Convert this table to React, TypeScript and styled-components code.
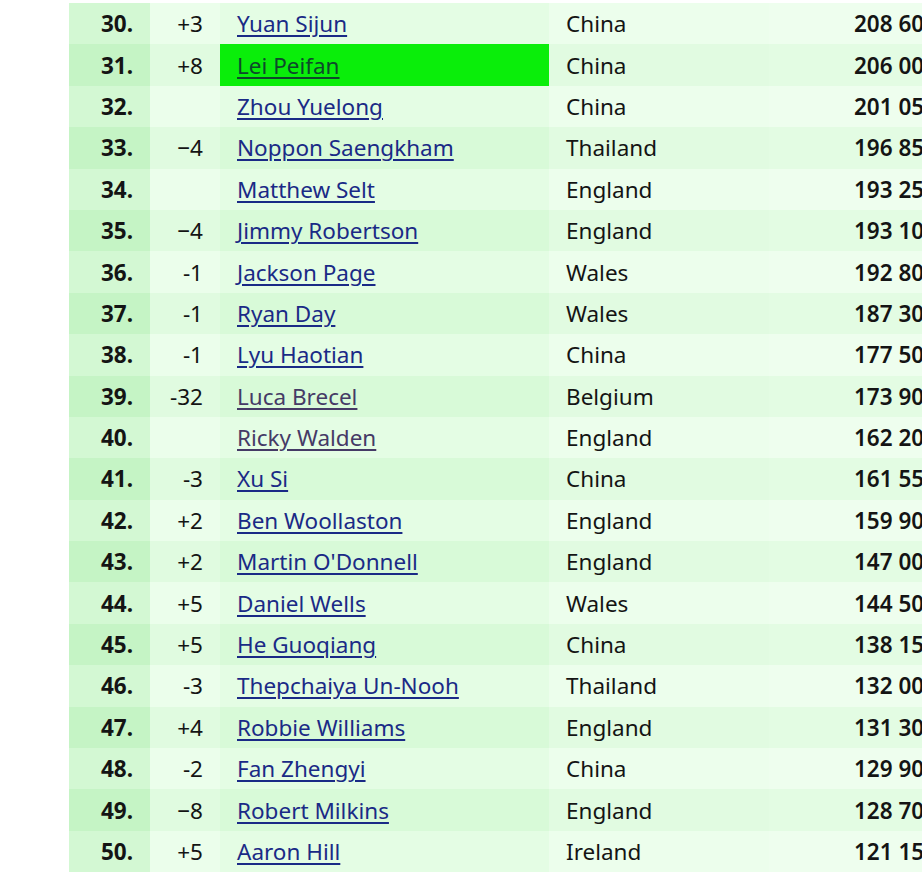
import React from "react";
import styled, { createGlobalStyle } from "styled-components";

const GlobalStyle = createGlobalStyle`
  html, body {
    margin: 0;
    padding: 0;
    background: #ffffff;
    overflow: hidden;
  }
`;

type Player = {
  rank: number;
  change: string;
  name: string;
  country: string;
  points: string;
  visited?: boolean;
  highlight?: boolean;
};

const players: Player[] = [
  { rank: 30, change: "+3", name: "Yuan Sijun", country: "China", points: "208 600" },
  { rank: 31, change: "+8", name: "Lei Peifan", country: "China", points: "206 000", highlight: true },
  { rank: 32, change: "", name: "Zhou Yuelong", country: "China", points: "201 050" },
  { rank: 33, change: "−4", name: "Noppon Saengkham", country: "Thailand", points: "196 850" },
  { rank: 34, change: "", name: "Matthew Selt", country: "England", points: "193 250" },
  { rank: 35, change: "−4", name: "Jimmy Robertson", country: "England", points: "193 100" },
  { rank: 36, change: "-1", name: "Jackson Page", country: "Wales", points: "192 800" },
  { rank: 37, change: "-1", name: "Ryan Day", country: "Wales", points: "187 300" },
  { rank: 38, change: "-1", name: "Lyu Haotian", country: "China", points: "177 500" },
  { rank: 39, change: "-32", name: "Luca Brecel", country: "Belgium", points: "173 900", visited: true },
  { rank: 40, change: "", name: "Ricky Walden", country: "England", points: "162 200", visited: true },
  { rank: 41, change: "-3", name: "Xu Si", country: "China", points: "161 550" },
  { rank: 42, change: "+2", name: "Ben Woollaston", country: "England", points: "159 900" },
  { rank: 43, change: "+2", name: "Martin O'Donnell", country: "England", points: "147 000" },
  { rank: 44, change: "+5", name: "Daniel Wells", country: "Wales", points: "144 500" },
  { rank: 45, change: "+5", name: "He Guoqiang", country: "China", points: "138 150" },
  { rank: 46, change: "-3", name: "Thepchaiya Un-Nooh", country: "Thailand", points: "132 000" },
  { rank: 47, change: "+4", name: "Robbie Williams", country: "England", points: "131 300" },
  { rank: 48, change: "-2", name: "Fan Zhengyi", country: "China", points: "129 900" },
  { rank: 49, change: "−8", name: "Robert Milkins", country: "England", points: "128 700" },
  { rank: 50, change: "+5", name: "Aaron Hill", country: "Ireland", points: "121 150" },
];

const Page = styled.div`
  width: 922px;
  height: 875px;
  overflow: hidden;
  padding: 3px 0 0 69px;
  box-sizing: border-box;
  font-family: "Noto Sans", "Open Sans", sans-serif;
`;

const Table = styled.table`
  border-collapse: collapse;
  table-layout: fixed;
  width: 868px;
  font-size: 22.5px;
  color: #141414;
`;

const Row = styled.tr`
  height: 41.4px;
`;

const Cell = styled.td<{ $bg: string }>`
  box-sizing: border-box;
  background: ${(p) => p.$bg};
  padding: 0 17px;
  white-space: nowrap;
  overflow: hidden;
  vertical-align: middle;
`;

const RankCell = styled(Cell)`
  width: 81px;
  text-align: right;
  font-weight: 700;
`;

const ChangeCell = styled(Cell)`
  width: 70px;
  text-align: right;
`;

const NameCell = styled(Cell)<{ $highlight?: boolean }>`
  width: 329px;
  background: ${(p) => (p.$highlight ? "#0aee0a" : p.$bg)};
`;

const CountryCell = styled(Cell)`
  width: 220px;
`;

const PointsCell = styled(Cell)`
  width: 168px;
  text-align: right;
  font-weight: 600;
  padding-right: 0;
`;

const PlayerLink = styled.a<{ $visited?: boolean; $highlight?: boolean }>`
  color: ${(p) => (p.$highlight ? "#0d4a2a" : p.$visited ? "#453a66" : "#1a2a86")};
  text-decoration: underline;
  text-underline-offset: 3px;
  text-decoration-thickness: 1.5px;
`;

const shade = (odd: boolean, even: string, oddCol: string) => (odd ? oddCol : even);

export default function App() {
  return (
    <>
      <GlobalStyle />
      <Page>
        <Table>
          <tbody>
            {players.map((p) => {
              const odd = p.rank % 2 === 1;
              return (
                <Row key={p.rank}>
                  <RankCell $bg={shade(odd, "#d3f8d3", "#c5f4c5")}>{p.rank}.</RankCell>
                  <ChangeCell $bg={shade(odd, "#ebfeeb", "#e0fbe0")}>{p.change}</ChangeCell>
                  <NameCell $bg={shade(odd, "#e4fde4", "#d8fad8")} $highlight={p.highlight}>
                    <PlayerLink href="#" $visited={p.visited} $highlight={p.highlight}>
                      {p.name}
                    </PlayerLink>
                  </NameCell>
                  <CountryCell $bg={shade(odd, "#ecfeec", "#e1fbe1")}>{p.country}</CountryCell>
                  <PointsCell $bg={shade(odd, "#eefeee", "#e3fce3")}>{p.points}</PointsCell>
                </Row>
              );
            })}
          </tbody>
        </Table>
      </Page>
    </>
  );
}
